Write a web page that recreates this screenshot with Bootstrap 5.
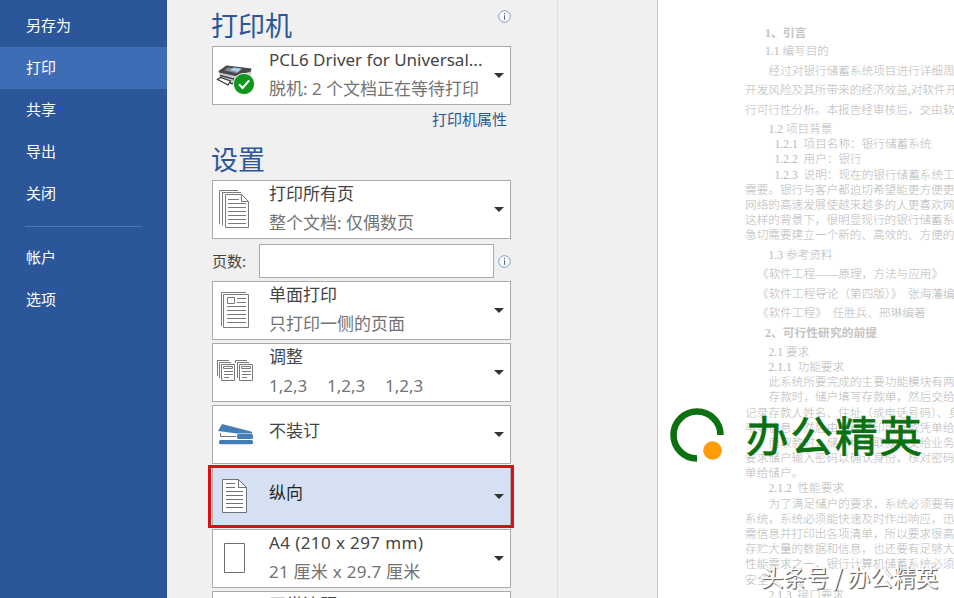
<!DOCTYPE html>
<html lang="zh-CN">
<head>
<meta charset="utf-8">
<meta name="viewport" content="width=device-width, initial-scale=1">
<title>打印</title>
<link href="https://cdn.jsdelivr.net/npm/bootstrap@5.3.0/dist/css/bootstrap.min.css" rel="stylesheet">
<style>
body{height:598px;background:#f0f0f0;font-family:"Noto Sans","Noto Sans CJK SC",sans-serif;color:#444}
.side{width:167px;background:#2b579a;padding-top:5px}
.side .nav-link{height:42px;line-height:40px;padding:0 0 0 26px;color:#fff;font-size:15px;border-radius:0}
.side .nav-link.active{background:#3e6db5}
.side hr{margin:11px 25px 10px;border-top:1px solid #4a78bd;opacity:1;width:117px}
.panel{width:391px;height:598px;padding:0 46px 0 45px;border-right:1px solid #dedede}
.panel>*{flex-shrink:0}
.ttl{font-size:27px;line-height:46px;height:46px;color:#2b579a;margin:0 0 0 -1px;padding-top:3px;font-weight:400}
.info{margin-top:10px}
.opt{height:59px;width:299px;background:#fff;border:1px solid #ababab;border-radius:0;padding:0;margin-bottom:3px;color:#444;text-align:left;flex:none}
.opt.picked{background:#d5e1f2;color:#262626}
.ico{width:56px;height:57px;flex:none}
.ico.page{margin:0 1px 0 -1px}
.lines{font-size:17px;line-height:28.5px;padding-bottom:2px;white-space:pre}
.lines.single{padding-bottom:6px}
.sub{color:#737373}
.collate{word-spacing:.5px}
.size1{letter-spacing:.4px}
.size2{letter-spacing:.25px}
.caret{width:0;border:5px solid transparent;border-top-color:#333;border-bottom:0;margin-right:6px}
.redbox{position:absolute;left:-5px;top:-3px;width:306px;height:63px;border:3px solid #e30b13}
.prop{font-size:15px;line-height:29px;height:29px;color:#2b579a;margin-top:-3px;padding-right:4px}
.pages{height:39px;padding:2px 0 3px;font-size:15px}
.pages input{width:235px;height:34px;border:1px solid #ababab;border-radius:0;padding:0}
.pages label{width:47px}
.preview{margin-left:99px;border-left:1px solid #c6c6c6;background:#fff;position:relative}
.doc{padding:23px 0 0 87px;font-family:"Liberation Serif","Noto Sans CJK SC",serif;font-weight:300;font-size:11.63px;color:#b8b8b8;white-space:pre}
.doc p{margin:0;height:15.2px;line-height:20px}
.doc .loose{height:19.42px}
.doc b{font-weight:700;color:#c4c4c4;font-size:11.8px}
.i1{padding-left:20px}.i2{padding-left:23.5px}.i3{padding-left:29.5px}.i0{padding-left:12px}
.brand-mark{position:absolute;left:12px;top:405px}
.brand-text{position:absolute;left:88px;top:404px;font:400 42.5px/60px "Noto Sans CJK SC",sans-serif;letter-spacing:2px;color:#0a7010;-webkit-text-stroke:.8px #0a7010;white-space:nowrap}
.credit{position:absolute;left:103px;top:562px;font:400 22.6px/30px "Noto Sans CJK SC",sans-serif;color:#fff;text-shadow:1px 1px 1px #666,1px 1px 0 #777;white-space:pre}
</style>
<script src="https://cdn.jsdelivr.net/npm/bootstrap@5.3.0/dist/js/bootstrap.bundle.min.js"></script>
</head>
<body class="d-flex overflow-hidden">
<nav class="side nav flex-column flex-nowrap flex-shrink-0">
  <a class="nav-link">另存为</a><a class="nav-link active">打印</a><a class="nav-link">共享</a><a class="nav-link">导出</a><a class="nav-link">关闭</a>
  <hr>
  <a class="nav-link">帐户</a><a class="nav-link">选项</a>
</nav>

<main class="panel d-flex flex-column flex-shrink-0 overflow-hidden">
  <div class="d-flex justify-content-between">
    <h1 class="ttl">打印机</h1>
    <svg class="info" width="13" height="13" viewBox="0 0 13 13"><circle cx="6.5" cy="6.5" r="5.8" fill="#f8fafd" stroke="#7f9cc8"/><path d="M6.5 5.3v4.5M6.5 3v1.2" stroke="#55657f"/></svg>
  </div>
  <button class="opt btn d-flex align-items-center">
    <svg class="ico" viewBox="0 0 56 57"><path d="M6 24.500L13.500 18.500 38 22v9L22 37 7 31z" fill="#c9cbcd"/><path d="M5.500 24L13.500 18.500 38.500 21.500 38 24.500 22 29 6 25.500z" fill="#47494d"/><path d="M11 23.500l4-3 14 1.800-5 4z" fill="#85898e"/><path d="M17 23l3.500-2.500 8 1-4 3.500z" fill="#a6d0f0"/><path d="M7 28.500l14 3.500v5l-4-1" fill="none" stroke="#3f4144" stroke-width="1.500"/><path d="M4.500 32.500l3-2 10 3.500-2.500 4z" fill="#fff" stroke="#333" stroke-width="1.200"/><circle cx="31" cy="37" r="10.600" fill="#11951d" stroke="#fff" stroke-width=".9"/><path d="M26 37.300l3.600 3.700 6.600-7.600" fill="none" stroke="#fff" stroke-width="2"/></svg>
    <span class="lines flex-grow-1">PCL6 Driver for Universal...<br><span class="sub">脱机: 2 个文档正在等待打印</span></span><i class="caret"></i>
  </button>
  <div class="prop text-end">打印机属性</div>
  <h2 class="ttl">设置</h2>
  <button class="opt btn d-flex align-items-center">
    <svg class="ico page" viewBox="0 0 56 57" fill="none" stroke="#7a7a7a"><path d="M7.500 43V9.500H26M10.500 44.500V11.500H29M13.500 46.500v-33h16l7 7v26zM29.500 13.500v7h7" /><path d="M16 18.500h11M16 22.500h18M16 26.500h18M16 30.500h18M16 34.500h18M16 38.500h18M16 42.500h18"/></svg>
    <span class="lines flex-grow-1">打印所有页<br><span class="sub">整个文档: 仅偶数页</span></span><i class="caret"></i>
  </button>
  <div class="pages d-flex align-items-center"><label for="pg">页数:</label><input id="pg" class="form-control"><svg class="ms-1" width="13" height="13" viewBox="0 0 13 13"><circle cx="6.500" cy="6.500" r="5.800" fill="#f8fafd" stroke="#7f9cc8"/><path d="M6.500 5.300v4.500M6.500 3v1.200" stroke="#55657f"/></svg></div>
  <button class="opt btn d-flex align-items-center">
    <svg class="ico page" viewBox="0 0 56 57" fill="none" stroke="#7a7a7a"><path d="M9.500 44V10.500H34M11.500 12.500h25v33h-25zM15.500 15.500h7v6h-7zM25 16.500h9M25 20.500h9M15 24.500h19M15 28.500h19M15 32.500h19M15 36.500h19M15 40.500h19"/></svg>
    <span class="lines flex-grow-1">单面打印<br><span class="sub">只打印一侧的页面</span></span><i class="caret"></i>
  </button>
  <button class="opt btn d-flex align-items-center">
    <svg class="ico page" viewBox="0 0 56 57" fill="none" stroke="#7a7a7a"><path d="M5.500 32V16.500H17M7.500 34V18.500H19M9.500 20.500h13v16h-13zM11.500 22.500h9v2h-9zM12 27.500h9M12 30.500h9M12 33.500h5"/><path d="M23.500 19V16.500H35M25.500 34V18.500H37M27.500 20.500h13v16h-13zM29.500 22.500h9v2h-9zM30 27.500h9M30 30.500h9M30 33.500h5"/></svg>
    <span class="lines flex-grow-1">调整<br><span class="sub collate">1,2,3    1,2,3    1,2,3</span></span><i class="caret"></i>
  </button>
  <button class="opt btn d-flex align-items-center">
    <svg class="ico page" viewBox="0 0 56 57"><path d="M10 18l29 7.500q2 .5 1 2H25L6 25z" fill="#457eb6"/><path d="M8.500 27v3.500H24" fill="none" stroke="#777"/><rect x="25" y="28" width="16" height="5" rx="1.500" fill="#457eb6"/><rect x="7" y="34" width="34" height="4.300" rx="1.500" fill="#457eb6"/></svg>
    <span class="lines single flex-grow-1">不装订</span><i class="caret"></i>
  </button>
  <button class="opt picked btn d-flex align-items-center position-relative">
    <svg class="ico page" viewBox="0 0 56 57" stroke="#6f7378"><path d="M10.500 11.500h16l8 8v25h-24z" fill="#fff"/><path d="M26.500 11.500v8h8M14 15.500h9M14 19.500h9M14 23.500h17M14 27.500h17M14 31.500h17M14 35.500h17M14 39.500h17" fill="none"/></svg>
    <span class="lines single flex-grow-1">纵向</span><i class="caret"></i><span class="redbox"></span>
  </button>
  <button class="opt btn d-flex align-items-center">
    <svg class="ico page" viewBox="0 0 56 57"><path d="M12.500 13.500h20v29h-20z" fill="#fff" stroke="#6f6f6f"/></svg>
    <span class="lines flex-grow-1"><span class="size1">A4 (210 x 297 mm)</span><br><span class="sub size2">21 厘米 x 29.7 厘米</span></span><i class="caret"></i>
  </button>
  <button class="opt btn d-flex align-items-center">
    <span class="ico"></span><span class="lines flex-grow-1">正常边距<br> </span>
  </button>
</main>

<section class="preview flex-grow-1 overflow-hidden">
<div class="doc"><p class="loose i1"><b>1、引言</b></p><p class="loose i1">1.1 编写目的</p><p class="loose i2">经过对银行储蓄系统项目进行详细周</p><p class="loose">开发风险及其所带来的经济效益,对软件开</p><p class="loose">行可行性分析。本报告经审核后，交由软</p><p class="i2">1.2 项目背景</p><p class="i3">1.2.1  项目名称：银行储蓄系统</p><p class="i3">1.2.2  用户：银行</p><p class="i3">1.2.3  说明：现在的银行储蓄系统工作</p><p>需要。银行与客户都迫切希望能更方便更</p><p>网络的高速发展使越来越多的人更喜欢网</p><p>这样的背景下，很明显现行的银行储蓄系</p><p class="loose">急切需要建立一个新的、高效的、方便的</p><p class="loose i2">1.3 参考资料</p><p class="loose i0">《软件工程——原理，方法与应用》</p><p class="loose i0">《软件工程导论（第四版）》  张海藩编</p><p class="loose i0">《软件工程》  任胜兵、邢琳编著</p><p class="loose i1"><b>2、可行性研究的前提</b></p><p class="i2">2.1 要求</p><p class="i2">2.1.1  功能要求</p><p class="i2">此系统所要完成的主要功能模块有两</p><p class="i2">存款时，储户填写存款单，然后交给银</p><p>记录存款人姓名、住址（或电话号码）、身</p><p>率等信息，然后由系统打印出存款凭单给</p><p class="i2">而取款时，储户填写取款单交给业务</p><p>要求储户输入密码以确认身份，核对密码正</p><p>单给储户。</p><p class="i2">2.1.2  性能要求</p><p class="i2">为了满足储户的要求，系统必须要有高</p><p>系统，系统必须能快速及时作出响应，迅</p><p>需信息并打印出各项清单，所以要求很高的</p><p>存贮大量的数据和信息，也还要有足够大</p><p>性能需求之一，银行计算机储蓄系统必须</p><p>安全</p><p class="i2">2.1.3  接口要求</p></div>
<svg class="brand-mark" width="58" height="60" viewBox="0 0 58 60"><path d="M50.500 30A23.500 23.500 0 1 0 27 53.500" fill="none" stroke="#0a7010" stroke-width="6.500"/><circle cx="42.500" cy="45.500" r="9.300" fill="#ff9c08"/></svg>
<div class="brand-text">办公精英</div>
<div class="credit">头条号 / 办公精英</div>
</section>
</body>
</html>
